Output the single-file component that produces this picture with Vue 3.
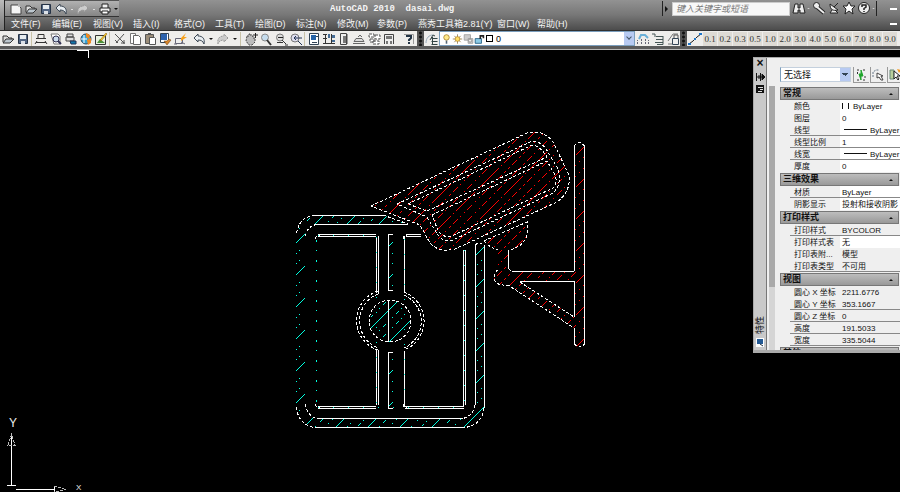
<script setup>
const quick = ['new', 'open', 'save', 'undo', 'dot', 'redo', 'dot', 'print', 'down']
const menus = ['文件(F)', '编辑(E)', '视图(V)', '插入(I)', '格式(O)', '工具(T)', '绘图(D)', '标注(N)', '修改(M)', '参数(P)', '燕秀工具箱2.81(Y)', '窗口(W)', '帮助(H)']
const help = ['binoculars', 'dot', 'key', 'dish', 'star', 'help', 'dot']
const tools = [
  ['open', 'save'],
  ['plot', 'preview', 'publish', 'globe', 'markup'],
  ['cut', 'copy', 'paste', 'brush', 'block'],
  ['undo', 'down', 'redo', 'down'],
  ['pan', 'zoom', 'zoomwin', 'zoomprev'],
  ['props', 'design', 'palette', 'sheet', 'marks', 'calc'],
  ['question'],
]
const layerTools = ['layercur', 'layerprev', 'layerstate']
const widths = ['0.1', '0.2', '0.3', '0.5', '1.0', '2.0', '3.0', '4.0', '5.0', '6.0', '7.0', '8.0', '9.0']
const groups = [
  { title: '常规', rows: [
    { k: '颜色', v: 'ByLayer', t: 'swatch', w: 1 }, { k: '图层', v: '0', w: 1 },
    { k: '线型', v: 'ByLayer', t: 'line', w: 1, u: 1 }, { k: '线型比例', v: '1', w: 1, u: 1 },
    { k: '线宽', v: 'ByLayer', t: 'line', w: 1, u: 1 }, { k: '厚度', v: '0', w: 1 }] },
  { title: '三维效果', rows: [{ k: '材质', v: 'ByLayer', w: 1, u: 1 }, { k: '阴影显示', v: '投射和接收阴影', w: 1 }] },
  { title: '打印样式', rows: [
    { k: '打印样式', v: 'BYCOLOR', u: 1 }, { k: '打印样式表', v: '无', w: 1 },
    { k: '打印表附...', v: '模型' }, { k: '打印表类型', v: '不可用', u: 1 }] },
  { title: '视图', rows: [
    { k: '圆心 X 坐标', v: '2211.6776' }, { k: '圆心 Y 坐标', v: '353.1667', u: 1 },
    { k: '圆心 Z 坐标', v: '0', u: 1 }, { k: '高度', v: '191.5033', u: 1 }, { k: '宽度', v: '335.5044', u: 1 }] },
  { title: '其他', rows: [] },
]

// 45 degree hatch: every third line is drawn long, the others dotted
const hatch = (from, to, step, start, end, phase) => {
  const lines = { long: '', dotted: '' }
  for (let c = from, i = 0; c < to; c += step, i++) {
    const s = Math.round(c)
    lines[i % 3 === phase ? 'long' : 'dotted'] += `M${start} ${s - start}L${end} ${s - end}`
  }
  return lines
}
const cyan = hatch(507, 920, 32 / 3, 290, 490, 0)
const red = hatch(560, 940, 32 / 3, 360, 590, 1)
</script>

<template>
  <svg class="sprite" aria-hidden="true">
    <symbol id="i-new" viewBox="0 0 14 14"><path d="M2 3h7l3 3v6H2z" fill="#f4f4f4" stroke="#444" /><path d="M9 2l3 3H9z" fill="#bbb" /></symbol>
    <symbol id="i-open" viewBox="0 0 14 14"><path d="M2 10V4h4l2 2h3v2" fill="#ddd" stroke="#333" /><path d="M2 11l3-4h8l-4 4z" fill="#bcc6ce" stroke="#333" /></symbol>
    <symbol id="i-save" viewBox="0 0 14 14"><path d="M2.500 2.500h9v9h-9z" fill="#526582" stroke="#263345" /><path d="M4 3h6v4H4z" fill="#e6ebef" /><path d="M5 9h4v3H5z" fill="#dce1e7" /></symbol>
    <symbol id="i-undo" viewBox="0 0 14 14"><path d="M2 6l4-4v2c5 0 7 3 6 8-1-3-3-4-6-4v2z" fill="#e9eef2" stroke="#3c4855" /></symbol>
    <symbol id="i-redo" viewBox="0 0 14 14"><path d="M12 6L8 2v2c-5 0-7 3-6 8 1-3 3-4 6-4v2z" fill="#ccc" stroke="#999" stroke-dasharray="2 1" /></symbol>
    <symbol id="i-dot" viewBox="0 0 6 14"><path d="M2 7h2v1H2z" fill="#ddd" /></symbol>
    <symbol id="i-down" viewBox="0 0 6 14"><path d="M1 6h4L3 8z" fill="#111" /></symbol>
    <symbol id="i-print" viewBox="0 0 14 14"><path d="M4 6V2h6v4M2 6h10v4H2z" fill="#eee" stroke="#222" /><path d="M4 9h6v3H4z" fill="#fff" stroke="#222" /></symbol>
    <symbol id="i-plot" viewBox="0 0 14 14"><path d="M4 6V2.500h6V6M2 6.500h10M2 10.500h10M1 12l2-3M13 12l-2-3" fill="none" stroke="#333" /></symbol>
    <symbol id="i-preview" viewBox="0 0 14 14"><path d="M2 2h7l2 2v8H5z" fill="#fff" stroke="#777" /><circle cx="7" cy="7" r="3" fill="#cde" stroke="#335" /><path d="M9 9l3 3" stroke="#335" stroke-width="2" /></symbol>
    <symbol id="i-publish" viewBox="0 0 14 14"><path d="M3 2h6v3H3zM2 5h8v4H2z" fill="#ddd" stroke="#444" /><path d="M6 9h6v3H7z" fill="#17a" stroke="#235" /></symbol>
    <symbol id="i-globe" viewBox="0 0 14 14"><circle cx="7" cy="7" r="5" fill="#36a4d8" stroke="#345" /><path d="M5 3v8M2 7h6" stroke="#fff" /><path d="M7 1l4 2-1 4-3-2zM8 8l4-2v5l-3 2z" fill="#f08a21" /></symbol>
    <symbol id="i-markup" viewBox="0 0 14 14"><path d="M1.500 3.500h10v9h-10z" fill="#e9f2df" stroke="#333" /><path d="M3 11l3-4 5 4z" fill="#4b8f3a" /><path d="M6 8l6-7 1 1-6 7z" fill="#ffd22e" stroke="#7a4d00" stroke-width=".5" /></symbol>
    <symbol id="i-cut" viewBox="0 0 14 14"><path d="M2 2l9 9M11 2L3 11" stroke="#555" /><path d="M2 8l3 3M8 11h4M11 8v4" stroke="#555" /></symbol>
    <symbol id="i-copy" viewBox="0 0 14 14"><path d="M2.500 1.500h5v2h-1v8h-4z" fill="#fff" stroke="#777" /><path d="M5.500 3.500h5l2 2v7h-7z" fill="#fff" stroke="#666" /></symbol>
    <symbol id="i-paste" viewBox="0 0 14 14"><path d="M2.500 2.500h8v9h-8z" fill="#9a8c78" stroke="#555" /><path d="M5 1h3v2H5z" fill="#555" /><path d="M6.500 5.500h5l1 1v6h-6z" fill="#fff" stroke="#555" /></symbol>
    <symbol id="i-brush" viewBox="0 0 14 14"><path d="M2.500 1.500h8v9h-8z" fill="#fff" stroke="#345" /><path d="M3 2h6v6H3z" fill="#2c62ad" /><path d="M6 9l3 4 4-5-2-1-2 2z" fill="#d7852b" stroke="#653c12" stroke-width=".5" /></symbol>
    <symbol id="i-block" viewBox="0 0 14 14"><path d="M2.500 6.500h7v5h-7zM1 12h3M8 10l4 2" fill="#eee" stroke="#667" /><path d="M8 6l5-5-2 4h3l-6 4z" fill="#f6a01a" /></symbol>
    <symbol id="i-pan" viewBox="0 0 14 14"><path d="M3 4h2V2h2v2h2v2h2v4l-3 3H5L2 9z" fill="#bbb" stroke="#444" stroke-dasharray="2 1" /><path d="M9 3h5M11.500 1v5" stroke="#222" /></symbol>
    <symbol id="i-zoom" viewBox="0 0 14 14"><circle cx="6" cy="5.500" r="3.500" fill="#c5dced" stroke="#888" /><path d="M8 8l4 5" stroke="#333" stroke-width="2" /></symbol>
    <symbol id="i-zoomwin" viewBox="0 0 14 14"><circle cx="6" cy="5.500" r="3.500" fill="#dcdcdc" stroke="#777" /><path d="M4 5.500h5" stroke="#222" /><path d="M3 10.500h6M8 8l4 4M11 13h3" stroke="#333" /></symbol>
    <symbol id="i-zoomprev" viewBox="0 0 14 14"><circle cx="6" cy="6" r="4" fill="#dde" stroke="#777" /><path d="M5 6h8M7 4L5 6l2 2M9 9l4 4" stroke="#235" fill="none" /></symbol>
    <symbol id="i-props" viewBox="0 0 14 14"><path d="M2.500 1.500h9v11h-9z" fill="#fff" stroke="#345" /><path d="M4 3h5v5H4z" fill="#2563a8" /><path d="M5 10.500h5M9 4.500h2" stroke="#345" /></symbol>
    <symbol id="i-design" viewBox="0 0 14 14"><path d="M1 2.500h4M1 6.500h4M1 11.500h12M3.500 2v9M9.500 2v9" stroke="#333" /><path d="M6 2h2v4H6zM10 3h3v3h-3zM10 8h3v2h-3z" fill="#456c95" /></symbol>
    <symbol id="i-palette" viewBox="0 0 14 14"><path d="M3.500 1.500h6v11h-6z" fill="#eee" stroke="#444" /><path d="M6 4h3v7H6z" fill="#777" /><path d="M10 2h1v10h-1z" fill="#999" /></symbol>
    <symbol id="i-sheet" viewBox="0 0 14 14"><path d="M1 11.500h12M2 9.500l2-3h6l2 3zM6 5l2-2 2 2" fill="#ddd" stroke="#666" /></symbol>
    <symbol id="i-marks" viewBox="0 0 14 14"><path d="M2 2h5v3H2zM8 3h5v4H8zM3 7h4v3H3zM6 9h6v3H6z" fill="#fff" stroke="#555" stroke-dasharray="3 1" /></symbol>
    <symbol id="i-calc" viewBox="0 0 14 14"><path d="M2.500 12V2.500h9V12" fill="#eee" stroke="#444" /><path d="M4 4h6v3H4zM4 9h2v3H4zM8 9h2v3H8z" fill="#777" /></symbol>
    <symbol id="i-question" viewBox="0 0 14 14"><path d="M2 2.500h9.500V12" fill="none" stroke="#999" /><path d="M5 5V4h4v2L7 8v1M7 10v2" fill="none" stroke="#234" stroke-width="2" /></symbol>
    <symbol id="i-layers" viewBox="0 0 14 14"><path d="M1 11c0-5 3-8 7-8" fill="none" stroke="#9ab" /><path d="M5 8l3-5 2 1M6.500 6.500h6M6.500 9.500h6M6.500 12.500h6M7.500 5v8" stroke="#344" fill="#e5e5e5" /></symbol>
    <symbol id="i-bulb" viewBox="0 0 14 14"><circle cx="7" cy="5" r="3.500" fill="#ffe98b" stroke="#a27a25" /><path d="M6 9h2v4H6z" fill="#567" /></symbol>
    <symbol id="i-sun" viewBox="0 0 14 14"><path d="M7 1v12M1 7h12M3 3l8 8M11 3l-8 8" stroke="#8b7443" /><circle cx="7" cy="7" r="3" fill="#ffdf65" stroke="#bb8a28" /></symbol>
    <symbol id="i-vp" viewBox="0 0 14 14"><path d="M1.500 1.500h8v7h-8zM6.500 6.500h6v6h-6z" fill="#ccc" stroke="#999" /><circle cx="9" cy="9" r="2" fill="#eee" stroke="#888" /></symbol>
    <symbol id="i-lock" viewBox="0 0 14 14"><path d="M1.500 6.500h8v6h-8z" fill="#8ccbe6" stroke="#125078" /><path d="M8 7V3h4v3" fill="none" stroke="#222" stroke-width="2" /></symbol>
    <symbol id="i-layercur" viewBox="0 0 14 14"><path d="M3 7l2-4h4l3 3" fill="none" stroke="#6ab0d8" stroke-width="2" /><path d="M1.500 12V8M5.500 12V7M9.500 12V7M12.500 12V8" stroke="#667" stroke-dasharray="2 1" /></symbol>
    <symbol id="i-layerprev" viewBox="0 0 14 14"><path d="M1 2h3v3M5 4.500h7M5 7.500h7M4 10.500h8M6 12.500h6V4" stroke="#455" fill="none" /></symbol>
    <symbol id="i-layerstate" viewBox="0 0 14 14"><path d="M2 9l5-7h5M2 12h4" stroke="#777" fill="none" /><path d="M6.500 6.500h6v6h-6z" fill="#eee" stroke="#345" /><path d="M8 6V3h4v3" fill="none" stroke="#555" /></symbol>
    <symbol id="i-pline" viewBox="0 0 14 14"><path d="M1 12l4-3 4-4 4-3" stroke="#222" fill="none" /><path d="M0 11h3v2H0zM6 6h2v2H6zM11 1h3v2h-3z" fill="#1c74c8" /></symbol>
    <symbol id="i-binoculars" viewBox="0 0 14 14"><path d="M3 3h3v4h2V3h3l2 9H8V9H6v3H1z" fill="#eee" stroke="#222" /></symbol>
    <symbol id="i-key" viewBox="0 0 14 14"><path d="M5 6l7 6" stroke="#222" stroke-width="4" /><circle cx="4.500" cy="4.500" r="3" fill="#eee" stroke="#222" /><path d="M5 6l7 6" stroke="#eee" stroke-width="2" /></symbol>
    <symbol id="i-dish" viewBox="0 0 14 14"><path d="M3 3c0 6 3 7 8 6zM5 9l-2 3h8l-3-3M7 6l4-4" fill="#eee" stroke="#222" /></symbol>
    <symbol id="i-star" viewBox="0 0 14 14"><path d="M7 1l2 4h4l-3 3 1 5-4-3-4 3 1-5-3-3h4z" fill="#fff" stroke="#222" /></symbol>
    <symbol id="i-help" viewBox="0 0 14 14"><circle cx="7" cy="7" r="5.500" fill="#eee" stroke="#222" /><path d="M5 6V4h4v2L7 7.500V9M7 10v1" fill="none" stroke="#222" stroke-width="1.500" /></symbol>
    <symbol id="i-toggle" viewBox="0 0 14 14"><path d="M3 2h2M9 2h2M3 12h2M9 12h2M3.500 4v2M11 8v2" stroke="#333" /><path d="M7 2v4H5l2 6V8h2z" fill="#1fa52b" stroke="#1fa52b" /></symbol>
    <symbol id="i-pick" viewBox="0 0 14 14"><path d="M2 9V4l3-2h3" fill="none" stroke="#678" stroke-dasharray="2 1" /><path d="M6 5v5l2-1 2 3h2l-2-4h2z" fill="#fff" stroke="#444" /></symbol>
    <symbol id="i-qselect" viewBox="0 0 14 14"><path d="M2 2h4v9H2z" fill="#b9cf9c" stroke="#687" /><path d="M6 3v8l2-2 2 3 1-1-2-3h3z" fill="#fff" stroke="#222" /><path d="M9 1l4 1-2 3z" fill="#f59a20" /></symbol>
  </svg>

  <div class="window">
    <header class="head">
      <button class="app" aria-label="菜单浏览器"></button>
      <div class="bars">
        <div class="titlebar">
          <div class="quick">
            <button v-for="(n, i) in quick" :key="i" :class="['ico', { slim: n === 'dot' || n === 'down' }]" :aria-label="n"><svg><use :href="'#i-' + n" /></svg></button>
          </div>
          <h1 class="title">AutoCAD 2010&nbsp;&nbsp;dasai.dwg</h1>
          <div class="search"><i class="tri"></i><input type="text" aria-label="搜索" placeholder="键入关键字或短语" /></div>
          <div class="helps">
            <button v-for="(n, i) in help" :key="i" :class="['ico', { slim: n === 'dot' }]" :aria-label="n"><svg><use :href="'#i-' + n" /></svg></button>
          </div>
          <button class="min" aria-label="最小化"></button>
        </div>
        <nav class="menus">
          <a v-for="m in menus" :key="m" href="#">{{ m }}</a>
          <button class="min" aria-label="最小化文档"></button>
        </nav>
      </div>
    </header>

    <div class="toolbar">
      <div v-for="(g, gi) in tools" :key="gi" class="group">
        <button v-for="(n, i) in g" :key="i" :class="['ico', { slim: n === 'down' }]" :aria-label="n"><svg><use :href="'#i-' + n" /></svg></button>
      </div>
      <span class="grip"></span>
      <button class="ico" aria-label="图层特性"><svg><use href="#i-layers" /></svg></button>
      <button class="layer" aria-label="图层">
        <svg><use href="#i-bulb" /></svg><svg><use href="#i-sun" /></svg><svg><use href="#i-vp" /></svg><svg><use href="#i-lock" /></svg>
        <i class="sq"></i><span>0</span><b class="drop"></b>
      </button>
      <button v-for="n in layerTools" :key="n" class="ico" :aria-label="n"><svg><use :href="'#i-' + n" /></svg></button>
      <span class="grip"></span>
      <button class="ico wide" aria-label="多段线"><svg><use href="#i-pline" /></svg></button>
      <button v-for="w in widths" :key="w" class="num">{{ w }}</button>
    </div>

    <main class="canvas">
      <svg class="drawing" viewBox="0 50 900 442" role="img" aria-label="dasai.dwg">
        <defs>
          <clipPath id="frame">
            <path clip-rule="evenodd" d="M315 215H383L408 224H315Q305 225 305 236V408Q306 418 316 418H466Q475 417 475 408V245H484V408Q482 427 465 427H315Q297 425 296 408V235Q298 217 315 215z" />
            <path d="M389 235h4v56h-4zM389 352h4v56h-4z" />
            <circle cx="390" cy="321" r="21" />
          </clipPath>
          <clipPath id="camera">
            <path d="M371 206L527 133Q542 129 553 142L569 175Q572 192 553 204L455 249Q439 253 430 243L420 225z" />
            <path d="M484 241L527 222V235Q525 245 508 251V269L512 272H574V147Q579 138 584 147V343Q579 351 574 344V328L508 285Q496 287 494 280Q494 273 498 270V250z M520 282V282L574 317V282z" clip-rule="evenodd" />
          </clipPath>
        </defs>
        <g clip-path="url(#frame)" fill="none" stroke="#00ffe0" shape-rendering="crispEdges">
          <path :d="cyan.long" />
          <path :d="cyan.dotted" stroke-dasharray="1 5 4 3 1 4" />
        </g>
        <g clip-path="url(#camera)" fill="none" stroke="#ff0000" shape-rendering="crispEdges">
          <path :d="red.long" stroke-dasharray="26 3 2 3" />
          <path :d="red.dotted" stroke-dasharray="2 3 7 3 2 4" />
        </g>
        <g fill="none" stroke="#fff" shape-rendering="crispEdges">
          <path d="M315 215.500H383M317 224.500H408M317 418.500H463M315 427.500H465M475.500 245V405M484.500 245V408M463.500 250V406M465.500 250V405" />
          <path d="M318 234.500H376M318 236.500H376M376.500 237V293M378.500 236V294M393 234.500H388.500V290.500H393M404.500 237V293M406 234.500H421M406 236.500H421" />
          <path d="M376.500 350V405M378.500 350V405M393 352.500H388.500V408.500H393M404.500 351V406M318 406.500H376M318 408.500H376M405 406.500H464M405 408.500H464M388.500 300V342" />
          <path d="M508.500 250V269M512 271.500H574M520 281.500H574M574.500 146V271M574.500 281V317M574.500 328V344M584.500 146V344" />
          <g stroke-dasharray="3 2">
            <path d="M315 215.500Q298 217 296.500 235M317 224.500Q306 226 305.500 238M296.500 407Q298 425 315 427.500M305.500 404Q307 416 317 418.500M475 405Q474 415 463 418.500M484 408Q482 425 465 427.500" />
            <path d="M316 239Q315 235 320 235M316 404Q315 408 320 408M404 239Q403 235 407 235M404 404Q403 408 407 408" />
            <circle cx="390" cy="321" r="21" />
            <path d="M378 291A31 31 0 0 0 378 350M378 294A29 29 0 0 0 378 348M404 292A31 31 0 0 1 404 350M404 295A29 29 0 0 1 404 348" />
            <path d="M371 206L527 133Q543 129 553 142L569 175Q571 192 557 202L455 249Q439 253 430 243L420 225L371 206M383 215L408 224" />
            <path d="M397 204L530 142Q540 139 548 152L557 167Q563 184 553 193L453 240Q443 244 436 232L427 217z" />
            <path d="M408 204L530 146Q538 143 547 157L427 211z" />
            <path d="M432 215L547 161L555 175Q558 184 553 188L452 236Q442 239 437 228z" />
            <path d="M484 241L527 222V235Q524 246 511 249.500M484 241Q490 248 498 250M475 245Q480 241 484 246" />
            <path d="M498 270Q494 272 494.500 280Q497 286 508 285L574 328M520 282L574 317M509 269L512 272M574.500 146Q579 139 584.500 146M574.500 344Q579 350 584.500 344" />
          </g>
          <path d="M316.500 240V404" stroke="#00ffe0" stroke-dasharray="2 8 1 9" />
          <path d="M376.500 237V404M464.500 250V406M404.500 239V404M318 235.500H376M318 407.500H464" stroke="#00ffe0" stroke-dasharray="1 14" />
          <path d="M77 50.500H88.500V58" />
          <path d="M11.500 436V485M7 485.500H16M16 489.500H54M54.500 486V492" />
          <path d="M8 445L11.500 435L15 445zM54 486L66 489.500L54 492" stroke="#bbb" stroke-dasharray="3 1" />
        </g>
        <g class="axis"><text x="9" y="427">Y</text><text class="small" x="76" y="490">X</text></g>
      </svg>
    </main>

    <aside class="palette">
      <div class="rail">
        <button class="close" aria-label="关闭">×</button>
        <button class="hide" aria-label="自动隐藏"><svg viewBox="0 0 9 8"><path d="M.5 0v8M4.500 0v8M1 4h7M3 2v4M6 1l3 3-3 3z" stroke="#111" fill="#111" /></svg></button>
        <button class="opts" aria-label="选项"><svg viewBox="0 0 8 8"><path d="M0 0h8v8H0z" fill="#111" /><path d="M2 2.500h5M4 4.500h3M2 6.500h4" stroke="#ddd" /></svg></button>
        <span class="name">特性</span>
        <svg class="badge" viewBox="0 0 8 9"><path d="M0 0h8v9H0z" fill="#fff" /><path d="M1 1h6v5H1z" fill="#245a94" /><path d="M4 6l3 2" stroke="#234" /></svg>
      </div>
      <div class="scroll"><i></i></div>
      <div class="body">
        <div class="pick">
          <select aria-label="选择对象"><option>无选择</option></select>
          <button class="pb" aria-label="切换"><svg><use href="#i-toggle" /></svg></button>
          <button class="pb" aria-label="选择"><svg><use href="#i-pick" /></svg></button>
          <button class="pb" aria-label="快速选择"><svg><use href="#i-qselect" /></svg></button>
        </div>
        <section v-for="g in groups" :key="g.title">
          <h2>{{ g.title }}<i class="up"></i></h2>
          <table v-if="g.rows.length"><tbody>
            <tr v-for="r in g.rows" :key="r.k" :class="{ rule: r.u }">
              <th scope="row">{{ r.k }}</th>
              <td :class="{ lit: r.w }"><i v-if="r.t" :class="r.t"></i>{{ r.v }}</td>
            </tr>
          </tbody></table>
        </section>
      </div>
    </aside>
  </div>
</template>

<style>
body { margin: 0; background: #000; overflow: hidden; }
</style>

<style scoped>
.sprite { position: absolute; width: 0; height: 0; }
.window { position: relative; display: flex; flex-direction: column; min-height: 100vh; background: #000; overflow: hidden; font: 9px/12px "Liberation Sans", "Noto Sans CJK SC", sans-serif; }
button { border: 0; padding: 0; margin: 0; background: none; font: inherit; color: inherit; }
.head { display: flex; background: linear-gradient(#929292, #777 50%, #4c4c4c); height: 30px; border-bottom: 1px solid #303030; }
.app { width: 5px; background: linear-gradient(#bbb, #777); border-right: 1px solid #222; flex: none; }
.bars { flex: 1; min-width: 0; }
.titlebar { display: flex; height: 17px; align-items: center; }
.quick { display: flex; align-items: center; box-sizing: border-box; width: 114px; height: 17px; padding-left: 3px; background: linear-gradient(#b2b2b2, #858585); border-bottom: 1px solid #333; border-top: 1px solid #555; flex: none; }
.ico { display: flex; width: 15px; height: 14px; flex: none; justify-content: center; }
.ico svg { width: 14px; height: 14px; }
.slim { width: 9px; }
.slim svg { width: 6px; }
.quick .slim { width: 7px; }
.helps .slim { width: 5px; }
.title { flex: 1; margin: 0; padding-left: 211px; font: bold 9px/14px "Liberation Mono", monospace; color: #f5f5f5; white-space: nowrap; }
.search { display: flex; align-items: center; height: 15px; border-left: 1px solid #222; flex: none; }
.tri { border: 3px solid transparent; border-left-color: #111; border-right: 0; margin: 0 4px 0 2px; }
.search input { box-sizing: border-box; width: 118px; height: 14px; border: 1px solid #ccc; padding: 0 3px; background: #f8f8f8; font: italic 9px/12px "Liberation Sans", "Noto Sans CJK SC", sans-serif; }
.search input::placeholder { color: #777; opacity: 1; }
.helps { display: flex; height: 15px; border-right: 1px solid #222; flex: none; padding-left: 1px; }
.min { width: 7px; height: 2px; background: #fff; margin: 0 3px 0 13px; flex: none; }
.menus { display: flex; height: 13px; align-items: center; padding-left: 6px; }
.menus a { min-width: 41px; color: #f4f4f4; text-decoration: none; white-space: nowrap; }
.menus a:nth-child(3n) { min-width: 40px; }
.menus a:nth-child(11) { min-width: 79px; }
.menus .min { margin-left: auto; }
.toolbar { display: flex; align-items: center; height: 15px; padding-right: 2px; background: #eeedeb; border-bottom: 3px solid #5b5b5b; box-shadow: 0 1px #b9b9b9; margin-bottom: 1px; white-space: nowrap; }
.group { display: flex; flex: none; padding-right: 1px; border-right: 1px solid #c8c2a8; }
.group:nth-child(2) { padding-left: 1px; }
.group:nth-child(3) { padding-left: 2px; border-right: 0; }
.group:nth-child(4) { padding-left: 3px; }
.group:nth-child(5) { padding-left: 2px; }
.group:nth-child(6) { padding-left: 1px; border-right: 0; }
.group:nth-child(7) { padding-left: 4px; border-right: 0; }
.grip { width: 7px; height: 15px; background: radial-gradient(circle, #111 1px, #555 2px) 0 0 / 7px 4px; flex: none; }
.layer { display: flex; align-items: center; flex: 1; min-width: 0; box-sizing: border-box; height: 15px; padding-left: 1px; background: #fff; border: 1px solid #7b9ebd; }
.layer svg { width: 11px; height: 12px; flex: none; }
.sq { width: 5px; height: 5px; border: 1px solid #000; margin: 0 3px 0 1px; }
.drop { width: 10px; height: 13px; margin-left: auto; background: #b7caf2; }
.drop::after { content: ""; display: block; width: 3px; height: 3px; margin: 3px; border: solid #456; border-width: 0 1px 1px 0; transform: rotate(45deg); }
.num { width: 15px; height: 14px; flex: none; color: #333; background: #dedbd5; border-right: 1px solid #eeedeb; font: 9px/14px "Liberation Serif", serif; text-align: center; }
.wide { width: 16px; }
.canvas { flex: 1; background: #000; }
.drawing { display: block; width: 100%; }
.axis { fill: #eee; font: 12px "Liberation Sans", sans-serif; }
.small { font-size: 8px; }
.palette { position: absolute; top: 57px; right: 0; display: flex; width: 147px; height: 296px; box-sizing: border-box; background: #efefef; border: 1px solid #aaa; border-width: 1px 0 3px 1px; color: #111; font-size: 8px; overflow: hidden; }
.rail { display: flex; flex-direction: column; align-items: center; width: 12px; background: #c9c9c9; border-right: 1px solid #777; flex: none; gap: 4px; }
.close { font: bold 12px/11px "Liberation Sans", sans-serif; height: 11px; }
.hide, .opts { height: 8px; display: flex; }
.hide svg { width: 9px; height: 8px; }
.opts svg { width: 8px; height: 8px; }
.name { margin-top: auto; font-size: 9px; writing-mode: vertical-rl; text-orientation: sideways; transform: rotate(180deg); }
.badge { width: 8px; height: 9px; flex: none; margin-bottom: 3px; }
.scroll { width: 6px; margin: 28px 5px 0 2px; background: #d5d5d5; flex: none; }
.scroll i { display: block; height: 201px; background: #a9a9a9; }
.body { flex: 1; min-width: 0; padding-top: 9px; }
.pick { display: flex; height: 17px; gap: 1px; margin-bottom: 3px; }
.pick select { appearance: none; width: 71px; height: 15px; flex: none; border: 1px solid #c4d0dd; border-left-color: #7b9ebd; padding: 0 3px; font: 9px/12px "Liberation Sans", "Noto Sans CJK SC", sans-serif; color: #111; border-radius: 0; margin-right: 1px; background: linear-gradient(45deg, transparent 50%, #345 50%) right 5px top 5px / 3px 3px no-repeat, linear-gradient(-45deg, transparent 50%, #345 50%) right 2px top 5px / 3px 3px no-repeat, linear-gradient(#b7caf2, #b7caf2) right / 10px 100% no-repeat, #fff; }
.pb { display: flex; align-items: center; width: 16px; height: 16px; border-left: 1px solid #999; border-bottom: 1px solid #999; flex: none; }
.pb svg { width: 14px; height: 14px; }
section + section { margin-top: 1px; }
h2 { display: flex; align-items: center; height: 11px; margin: 0 1px 0 0; padding: 0 5px 0 2px; border: 1px solid #777; background: linear-gradient(#bdbdbd, #999); font: bold 9px/11px "Liberation Sans", "Noto Sans CJK SC", sans-serif; }
.up { margin-left: auto; border: 2px solid transparent; border-top: 0; border-bottom-color: #111; }
table { width: 100%; border-collapse: collapse; table-layout: fixed; }
th, td { height: 12px; padding: 0; line-height: 11px; font-weight: normal; text-align: left; white-space: nowrap; overflow: hidden; box-sizing: border-box; }
th { width: 60px; padding-left: 14px; }
td { padding-left: 2px; }
.lit { background: #fff; }
.rule th { background: linear-gradient(#888, #888) 10px 11px / 60px 1px no-repeat; }
.rule td { box-shadow: inset 0 -1px #888; }
.swatch { display: inline-block; width: 5px; height: 6px; margin-right: 4px; border: solid #111; border-width: 0 1px; }
.line { display: inline-block; width: 23px; height: 1px; margin: 0 3px 3px 2px; background: #111; }
</style>
